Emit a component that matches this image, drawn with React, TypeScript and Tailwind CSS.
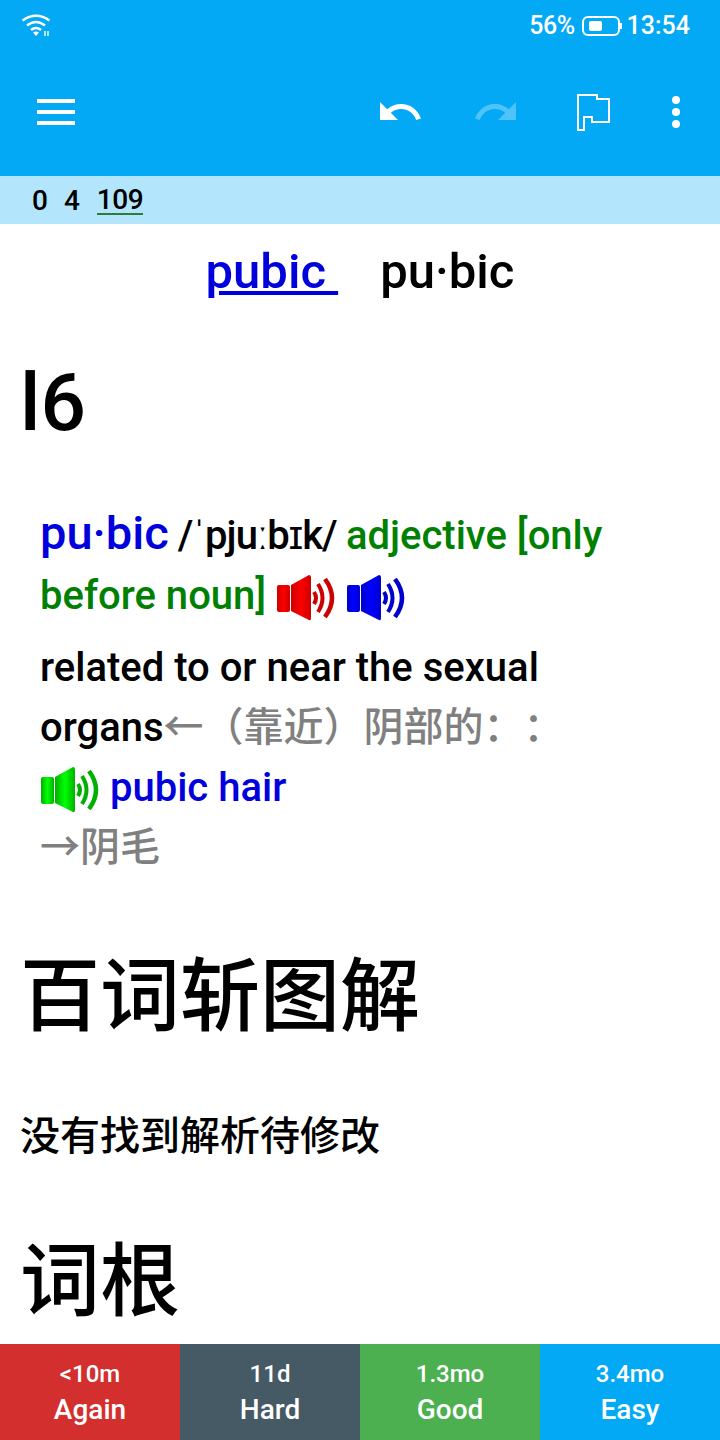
import React from 'react';

const Speaker = ({ light, dark, id }: { light: string; dark: string; id: string }) => (
  <svg width="60" height="46" viewBox="0 0 60 46" className="inline-block align-[-12px] blur-[0.6px]">
    <defs>
      <linearGradient id={id} x1="0" y1="0" x2="1" y2="0">
        <stop offset="0" stopColor={dark} />
        <stop offset="0.5" stopColor={light} />
        <stop offset="1" stopColor={dark} />
      </linearGradient>
    </defs>
    <rect x="1" y="10" width="13" height="27" rx="2" fill={`url(#${id})`} />
    <path d="M15 10 L33 0 Q35 0 35 3 L35 43 Q35 46 33 45 L15 36 Z" fill={`url(#${id})`} />
    <path d="M38 17 Q42 23 38 29" fill="none" stroke={dark} strokeWidth="4" />
    <path d="M42 9 Q51 23 42 37" fill="none" stroke={dark} strokeWidth="4" />
    <path d="M49 4 Q63 23 49 42" fill="none" stroke={dark} strokeWidth="4.5" />
  </svg>
);

const Heading = ({ children }: { children: React.ReactNode }) => (
  <h1 className="pl-5 text-[80px] leading-[120px] font-medium text-black">{children}</h1>
);

const AnswerButton = ({ time, label, color }: { time: string; label: string; color: string }) => (
  <div className={`flex flex-col items-center justify-center text-white ${color}`}>
    <span className="text-[24px] leading-[36px] font-medium">{time}</span>
    <span className="text-[28px] leading-[36px] font-medium">{label}</span>
  </div>
);

export default function App() {
  return (
    <div
      className="flex h-[1440px] w-[720px] flex-col overflow-hidden bg-white"
      style={{ fontFamily: 'Roboto, "Noto Sans CJK SC", sans-serif' }}
    >
      {/* Status bar + toolbar */}
      <header className="h-[176px] bg-[#03a9f4] text-white">
        <div className="flex h-12 items-center justify-between pl-[21px] pr-[30px] pt-1">
          <svg width="30" height="24" viewBox="0 0 30 24" fill="none" stroke="white" strokeWidth="2.6">
            <path d="M1.5 6.5 Q15 -3 28.5 6.5" />
            <path d="M6 11.5 Q15 4.5 24 11.5" />
            <path d="M10 16 Q15 12 20 16" />
            <path d="M12 18.5 L15 22 L18 18.5 Q15 16.5 12 18.5Z" fill="white" stroke="none" />
            <path d="M24 17 V22 M27 17 V22" strokeWidth="1.4" />
          </svg>
          <div className="flex items-center text-[25px] font-medium">
            <span className="tracking-[-0.5px]">56%</span>
            <div className="ml-[7px] mr-[5px] flex items-center">
              <div className="flex h-5 w-[38px] items-center rounded-[6px] border-2 border-white pl-[5px]">
                <div className="h-[10px] w-[13px] rounded-[2px] bg-white" />
              </div>
              <div className="h-[6px] w-[2px] bg-white" />
            </div>
            <span>13:54</span>
          </div>
        </div>
        <div className="relative flex h-[128px] items-center">
          <div className="ml-[37px] flex w-[38px] flex-col gap-[7px]">
            <div className="h-1 bg-white" />
            <div className="h-1 bg-white" />
            <div className="h-1 bg-white" />
          </div>
          <svg width="48" height="48" viewBox="0 0 24 24" fill="white" className="ml-[301px]">
            <path d="M12.5 8c-2.65 0-5.05.99-6.9 2.6L2 7v9h9l-3.62-3.62c1.39-1.16 3.16-1.88 5.12-1.88 3.54 0 6.55 2.31 7.6 5.5l2.37-.78C21.08 11.03 17.15 8 12.5 8z" />
          </svg>
          <svg width="48" height="48" viewBox="0 0 24 24" fill="white" opacity="0.3" className="ml-[48px]">
            <path d="M18.4 10.6C16.55 8.99 14.15 8 11.5 8c-4.65 0-8.58 3.03-9.96 7.22L3.9 16c1.05-3.19 4.05-5.5 7.6-5.5 1.95 0 3.73.72 5.12 1.88L13 16h9V7l-3.6 3.6z" />
          </svg>
          <svg width="34" height="38" viewBox="0 0 34 38" fill="none" stroke="white" strokeWidth="2" className="ml-[57px] mt-[2px]">
            <path d="M1 1 H20 V5 H32 V28 H15 V23 H7 V36 H1 Z" />
          </svg>
          <div className="ml-[61px] flex flex-col gap-1">
            <div className="h-2 w-2 rounded-full bg-white" />
            <div className="h-2 w-2 rounded-full bg-white" />
            <div className="h-2 w-2 rounded-full bg-white" />
          </div>
        </div>
      </header>

      {/* Card counts */}
      <div className="flex h-12 items-center gap-4 bg-[#b3e5fc] pl-8 pt-[2px] text-[28px] font-medium text-black">
        <span>0</span>
        <span>4</span>
        <span className="ml-px border-b-2 border-[#2e7d32] leading-[26px] tracking-[-0.5px]">109</span>
      </div>

      {/* Card content */}
      <main className="min-h-0 flex-1 overflow-hidden">
        <div className="flex h-24 items-center justify-center text-[49px] font-medium">
          <a className="whitespace-pre text-[#0000dd] underline">pubic </a>
          <span className="ml-[42px] text-black">pu·bic</span>
        </div>
        <div className="mt-[23px]">
          <Heading>l6</Heading>
        </div>
        <div className="mt-10 pl-10 pr-[60px] text-[40px] leading-[60px] font-medium [text-spacing-trim:space-all]">
          <p>
            <span className="text-[47px] text-[#0000dd]">pu·bic</span>
            <span className="tracking-[-0.9px] text-black"> /ˈpjuːbɪk/ </span>
            <span className="text-[#008000]">adjective [only before noun] </span>
            <Speaker id="red" light="#ff0000" dark="#cc0000" />{' '}
            <Speaker id="blue" light="#0000ff" dark="#0000cc" />
          </p>
          <p className="mt-3 text-black">
            related to or near the sexual organs
            <span className="text-[#808080]">←（靠近）阴部的：：</span>
          </p>
          <p className="text-[#0000dd]">
            <Speaker id="green" light="#00ff00" dark="#00b000" /> pubic hair
          </p>
          <p className="text-[#808080]">→阴毛</p>
        </div>
        <div className="mt-[59px]">
          <Heading>百词斩图解</Heading>
        </div>
        <p className="mt-[50px] pl-5 text-[40px] leading-[60px] font-medium text-black">没有找到解析待修改</p>
        <div className="mt-[55px]">
          <Heading>词根</Heading>
        </div>
      </main>

      {/* Answer buttons */}
      <footer className="grid h-24 grid-cols-4">
        <AnswerButton time="<10m" label="Again" color="bg-[#d32f2f]" />
        <AnswerButton time="11d" label="Hard" color="bg-[#455a64]" />
        <AnswerButton time="1.3mo" label="Good" color="bg-[#4caf50]" />
        <AnswerButton time="3.4mo" label="Easy" color="bg-[#03a9f4]" />
      </footer>
    </div>
  );
}
